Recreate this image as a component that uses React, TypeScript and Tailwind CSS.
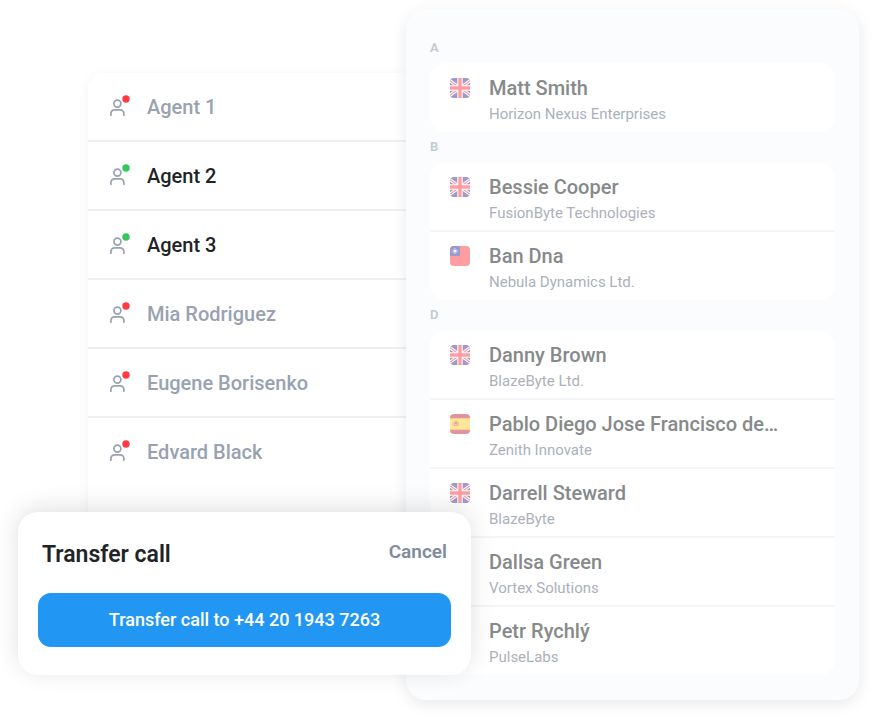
type Agent = { name: string; online: boolean };
type Flag = 'gb' | 'tw' | 'es';
type Contact = { name: string; company: string; flag: Flag };

const agents: Agent[] = [
  { name: 'Agent 1', online: false },
  { name: 'Agent 2', online: true },
  { name: 'Agent 3', online: true },
  { name: 'Mia Rodriguez', online: false },
  { name: 'Eugene Borisenko', online: false },
  { name: 'Edvard Black', online: false },
];

const groups: { letter: string; contacts: Contact[] }[] = [
  {
    letter: 'A',
    contacts: [{ name: 'Matt Smith', company: 'Horizon Nexus Enterprises', flag: 'gb' }],
  },
  {
    letter: 'B',
    contacts: [
      { name: 'Bessie Cooper', company: 'FusionByte Technologies', flag: 'gb' },
      { name: 'Ban Dna', company: 'Nebula Dynamics Ltd.', flag: 'tw' },
    ],
  },
  {
    letter: 'D',
    contacts: [
      { name: 'Danny Brown', company: 'BlazeByte Ltd.', flag: 'gb' },
      { name: 'Pablo Diego Jose Francisco de…', company: 'Zenith Innovate', flag: 'es' },
      { name: 'Darrell Steward', company: 'BlazeByte', flag: 'gb' },
      { name: 'Dallsa Green', company: 'Vortex Solutions', flag: 'gb' },
      { name: 'Petr Rychlý', company: 'PulseLabs', flag: 'gb' },
    ],
  },
];

function AgentIcon({ online }: { online: boolean }) {
  return (
    <svg className="h-6 w-[23px] shrink-0" viewBox="0 0 23 24" fill="none" aria-hidden="true">
      <g stroke="#98a2b3" strokeWidth="1.7" strokeLinecap="round">
        <circle cx="9.4" cy="8.6" r="3.5" />
        <path d="M2.9 20.2v-1.8a3.6 3.6 0 0 1 3.6-3.6h5.8a3.6 3.6 0 0 1 3.6 3.6v1.8" />
      </g>
      <circle cx="18" cy="4" r="3.7" fill={online ? '#34c759' : '#ff3b41'} />
    </svg>
  );
}

function FlagIcon({ flag }: { flag: Flag }) {
  return (
    <svg className="mt-[2px] h-5 w-5 shrink-0 rounded" viewBox="0 0 20 20" aria-hidden="true">
      {flag === 'gb' && (
        <>
          <rect width="20" height="20" fill="#999bcc" />
          <path d="M-1 2L10 10M21 2L10 10M-1 18L10 10M21 18L10 10" stroke="#fff" strokeWidth="3.2" />
          <path d="M-1 2L10 10M21 2L10 10M-1 18L10 10M21 18L10 10" stroke="#ff9da3" strokeWidth="1.3" />
          <path d="M10 0v20M0 10h20" stroke="#fff" strokeWidth="5.4" />
          <path d="M10 0v20M0 10h20" stroke="#ff9da3" strokeWidth="3.4" />
        </>
      )}
      {flag === 'tw' && (
        <>
          <rect width="20" height="20" fill="#ff9da3" />
          <rect width="10" height="10" fill="#999bcc" />
          <circle cx="5" cy="5" r="2.4" fill="none" stroke="#d4d5ea" strokeWidth="1" strokeDasharray="0.8 0.5" />
          <circle cx="5" cy="5" r="1.6" fill="#fff" />
        </>
      )}
      {flag === 'es' && (
        <>
          <rect width="20" height="20" fill="#e0959b" />
          <rect y="4.3" width="20" height="11.4" fill="#ffe699" />
          <path d="M3 8v4M8.5 8v4" stroke="#d9c3ad" strokeWidth="0.9" />
          <rect x="4.3" y="8.6" width="3.2" height="3.4" rx="1" fill="#e7a08f" />
          <path d="M4.5 7.8h2.8" stroke="#dc9190" strokeWidth="1" />
          <circle cx="5.9" cy="10.6" r="0.7" fill="#fff" />
        </>
      )}
    </svg>
  );
}

function AgentList() {
  return (
    <section className="mt-[73px] min-w-0 rounded-l-2xl bg-white pb-12 shadow-[0_2px_12px_rgba(0,0,0,0.05)]">
      <ul className="divide-y-2 divide-[#f0f0f1]">
        {agents.map((agent) => (
          <li key={agent.name} className="flex h-[69px] items-center gap-4 pt-px pl-5 last:h-[67px]">
            <AgentIcon online={agent.online} />
            <span className={`truncate text-xl font-medium ${agent.online ? 'text-[#1f2527]' : 'text-[#98a2b0]'}`}>
              {agent.name}
            </span>
          </li>
        ))}
      </ul>
    </section>
  );
}

function ContactList() {
  return (
    <section className="mt-[9px] min-w-0 rounded-[20px] bg-[#fafcfe] px-6 pt-6 pb-[25px] shadow-[0_4px_16px_rgba(0,0,0,0.09)]">
      {groups.map((group) => (
        <div key={group.letter}>
          <h3 className="text-[13px] leading-[30px] font-semibold text-[#c4c9d0]">{group.letter}</h3>
          <ul className="divide-y-2 divide-[#f3f5f6] rounded-2xl bg-white py-px">
            {group.contacts.map((contact) => (
              <li key={contact.name} className="flex gap-[19px] pt-3 pr-6 pb-[7px] pl-5">
                <FlagIcon flag={contact.flag} />
                <div className="min-w-0">
                  <p className="truncate text-xl leading-6 font-medium text-[#868a8a]">{contact.name}</p>
                  <p className="mt-1 truncate text-[15px] leading-5 text-[#abb1bb]">{contact.company}</p>
                </div>
              </li>
            ))}
          </ul>
        </div>
      ))}
    </section>
  );
}

function TransferDialog() {
  return (
    <section
      role="dialog"
      aria-labelledby="transfer-title"
      className="absolute top-[512px] left-[18px] w-[453px] rounded-[20px] bg-white px-5 pt-6 pb-7 shadow-[0_-4px_24px_rgba(0,0,0,0.12)]"
    >
      <div className="flex items-start justify-between px-1">
        <h2 id="transfer-title" className="text-[23px] leading-[38px] font-semibold text-[#1f2527]">
          Transfer call
        </h2>
        <button type="button" className="text-[19px] leading-8 font-semibold text-[#808b9d]">
          Cancel
        </button>
      </div>
      <button
        type="button"
        className="mt-[19px] h-[54px] w-full rounded-[13px] bg-[#2196f3] text-lg font-medium text-white"
      >
        Transfer call to +44 20 1943 7263
      </button>
    </section>
  );
}

export default function App() {
  return (
    <main className="relative grid grid-cols-[318fr_453fr] items-start overflow-hidden bg-white pr-[15px] pb-6 pl-[88px] font-[Roboto,sans-serif]">
      <AgentList />
      <ContactList />
      <TransferDialog />
    </main>
  );
}
